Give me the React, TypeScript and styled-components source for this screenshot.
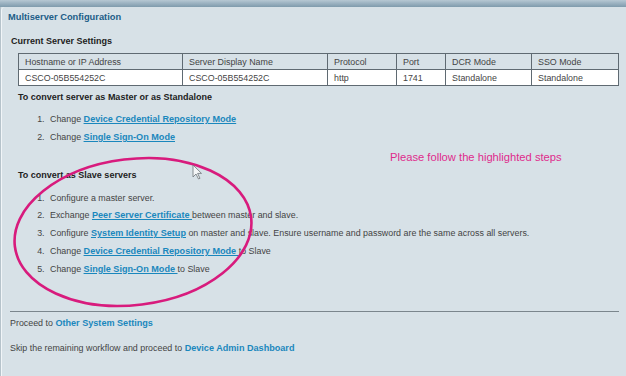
import styled, { createGlobalStyle } from "styled-components";

const GlobalStyle = createGlobalStyle`
  html, body {
    margin: 0;
    padding: 0;
    background: #d7e1e7;
  }
  body {
    font-family: "Liberation Sans", Arial, sans-serif;
    color: #333;
  }
`;

const Frame = styled.div`
  position: relative;
  width: 626px;
  height: 376px;
  overflow: hidden;
  background: #d7e1e7;
`;

const TopBar = styled.div`
  height: 7px;
  background: linear-gradient(to bottom, #b7c8d3 0%, #9fb5c4 40%, #7f9bad 100%);
`;

const Body = styled.div`
  display: flex;
  height: 369px;
`;

const Gutter = styled.div`
  width: 3px;
  background: #b6c3cb;
`;

const Panel = styled.div`
  flex: 1;
  border-left: 1px solid #f1f5f8;
  border-top-left-radius: 4px;
  background: #d7e1e7;
  padding: 4px 7px 0 6px;
`;

const Title = styled.h1`
  margin: 0;
  font-size: 9.3px;
  line-height: 12px;
  font-weight: bold;
  color: #215d87;
`;

const Heading = styled.h2<{ $top: number; $left?: number }>`
  margin: ${(p) => p.$top}px 0 0 ${(p) => p.$left ?? 3}px;
  font-size: 9px;
  line-height: 12px;
  font-weight: bold;
  color: #222;
`;

const Table = styled.table`
  margin: 6px 0 0 10px;
  width: 601px;
  table-layout: fixed;
  border-collapse: collapse;
  font-size: 8.9px;
  color: #444;
`;

const Cell = styled.td<{ $head?: boolean }>`
  border: 1px solid #5f6a72;
  height: 15px;
  padding: 0 6px;
  background: ${(p) => (p.$head ? "transparent" : "#ffffff")};
  white-space: nowrap;
`;

const Steps = styled.ol<{ $top: number }>`
  margin: ${(p) => p.$top}px 0 0 0;
  padding: 0 0 0 39px;
  font-size: 8.9px;
  color: #444;
`;

const Step = styled.li`
  height: 17.75px;
  line-height: 17.75px;
  padding-left: 3px;
`;

const StepLink = styled.a`
  color: #1a87bd;
  font-size: 9.1px;
  font-weight: bold;
  text-decoration: underline;
  cursor: pointer;
`;

const Note = styled.div`
  margin: 3px 0 0 382px;
  font-size: 11.2px;
  line-height: 14px;
  color: #df2b8c;
`;

const Divider = styled.hr`
  margin: 33px 0 0 2px;
  border: none;
  border-top: 1px solid #7b868d;
  height: 0;
`;

const Line = styled.p<{ $top: number }>`
  margin: ${(p) => p.$top}px 0 0 2px;
  font-size: 8.9px;
  line-height: 12px;
  color: #444;
`;

const PlainLink = styled.a`
  color: #1a87bd;
  font-size: 9.1px;
  font-weight: bold;
  cursor: pointer;
`;

const Overlay = styled.svg`
  position: absolute;
  left: 0;
  top: 0;
  pointer-events: none;
`;

const headers = [
  "Hostname or IP Address",
  "Server Display Name",
  "Protocol",
  "Port",
  "DCR Mode",
  "SSO Mode",
];
const values = ["CSCO-05B554252C", "CSCO-05B554252C", "http", "1741", "Standalone", "Standalone"];
const widths = [164, 145, 69, 49, 86, 87];

export default function App() {
  return (
    <Frame>
      <GlobalStyle />
      <TopBar />
      <Body>
        <Gutter />
        <Panel>
          <Title>Multiserver Configuration</Title>
          <Heading $top={12}>Current Server Settings</Heading>
          <Table>
            <colgroup>
              {widths.map((w, i) => (
                <col key={i} style={{ width: w }} />
              ))}
            </colgroup>
            <tbody>
              <tr>
                {headers.map((h) => (
                  <Cell key={h} $head>
                    {h}
                  </Cell>
                ))}
              </tr>
              <tr>
                {values.map((v, i) => (
                  <Cell key={i}>{v}</Cell>
                ))}
              </tr>
            </tbody>
          </Table>
          <Heading $top={5} $left={10}>
            To convert server as Master or as Standalone
          </Heading>
          <Steps $top={8}>
            <Step>
              Change <StepLink>Device Credential Repository Mode</StepLink>
            </Step>
            <Step>
              Change <StepLink>Single Sign-On Mode</StepLink>
            </Step>
          </Steps>
          <Note>Please follow the highlighted steps</Note>
          <Heading $top={5} $left={10}>
            To convert as Slave servers
          </Heading>
          <Steps $top={9}>
            <Step>Configure a master server.</Step>
            <Step>
              Exchange <StepLink>Peer Server Certificate </StepLink>between master and slave.
            </Step>
            <Step>
              Configure <StepLink>System Identity Setup</StepLink> on master and slave. Ensure
              username and password are the same across all servers.
            </Step>
            <Step>
              Change <StepLink>Device Credential Repository Mode </StepLink>to Slave
            </Step>
            <Step>
              Change <StepLink>Single Sign-On Mode </StepLink>to Slave
            </Step>
          </Steps>
          <Divider />
          <Line $top={5}>
            Proceed to <PlainLink>Other System Settings</PlainLink>
          </Line>
          <Line $top={13}>
            Skip the remaining workflow and proceed to <PlainLink>Device Admin Dashboard</PlainLink>
          </Line>
        </Panel>
      </Body>
      <Overlay width="626" height="376" viewBox="0 0 626 376">
        <ellipse
          cx="133"
          cy="232"
          rx="119"
          ry="73"
          transform="rotate(-7 133 232)"
          fill="none"
          stroke="#d81b7d"
          strokeWidth="2.6"
        />
        <path
          d="M193 165 L193 177 L196 174 L198.5 179 L200 178.3 L197.6 173.4 L201.5 173.4 Z"
          fill="#f4f6f7"
          stroke="#6d7378"
          strokeWidth="0.8"
          strokeLinejoin="round"
        />
      </Overlay>
    </Frame>
  );
}
